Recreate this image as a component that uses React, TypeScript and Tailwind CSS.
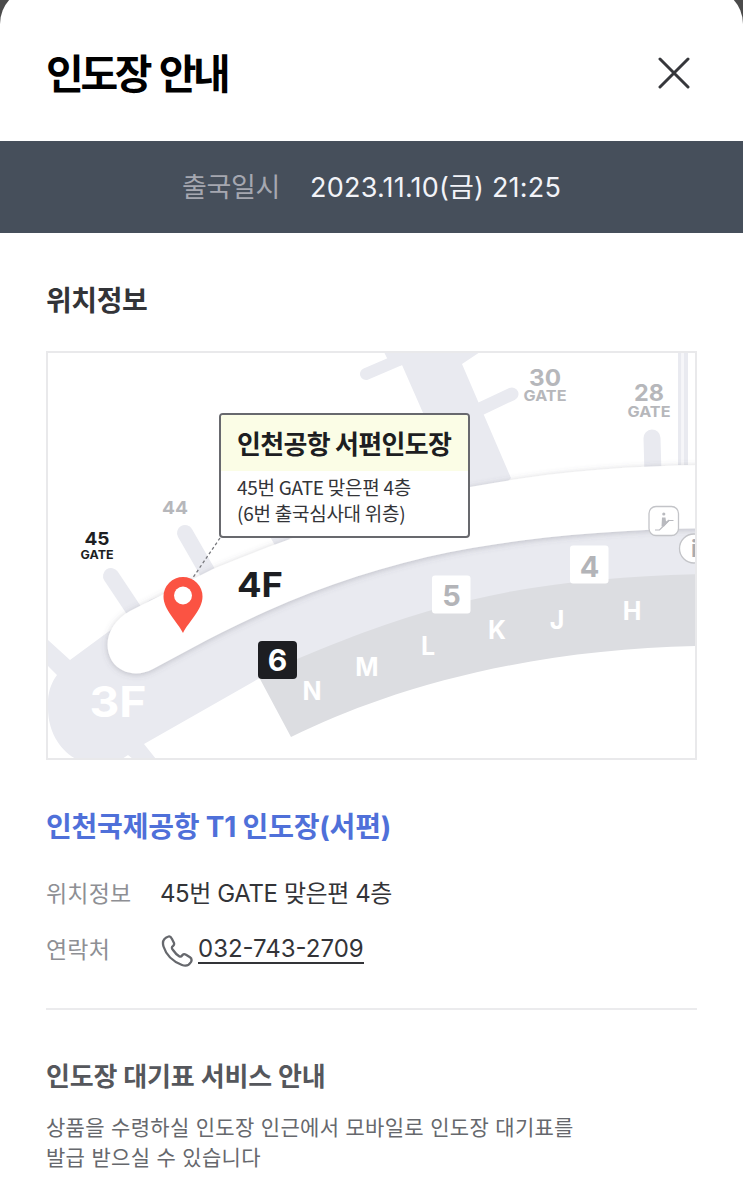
import type { ReactNode } from 'react';

const checkInCounters = [
  { label: 'N', x: 312, y: 700 },
  { label: 'M', x: 367, y: 676 },
  { label: 'L', x: 428, y: 655 },
  { label: 'K', x: 497, y: 639 },
  { label: 'J', x: 557, y: 629 },
  { label: 'H', x: 632, y: 620 },
];

function TerminalMap() {
  return (
    <svg viewBox="48 353 647 405" className="block h-[405px] w-[647px]" fontFamily="Inter, sans-serif" fontWeight="700" textAnchor="middle">
      <defs>
        <filter id="hallShadow" x="-5%" y="-10%" width="110%" height="125%">
          <feDropShadow dx="0" dy="1" stdDeviation="3" floodColor="#5c5f6b" floodOpacity="0.32" />
        </filter>
      </defs>

      {/* concourse and gate arms */}
      <g fill="#e9eaf0">
        <path d="M384 352H480L462 364L511 478L470 520L402 365L392 368Z" />
        <path d="M678 352h3.5v113H678zM684 352h4v113h-4z" />
        <path d="M681.500 352h2.500v113h-2.500z" fill="#f6f6f9" />
      </g>
      <g stroke="#e9eaf0" strokeLinecap="round" fill="none">
        <path d="M366 374L408 356" strokeWidth="12" />
        <path d="M512 394L478 410" strokeWidth="13" />
        <path d="M652 438L653 475" strokeWidth="17" />
        <path d="M185 533L212 580" strokeWidth="16" />
        <path d="M111 576L139 618" strokeWidth="16" />
        <path d="M268 517L284 545" strokeWidth="16" />
      </g>

      {/* 3F */}
      <path
        d="M47 639L70 660L108 632L150 600C300 535 480 490 696 500V590C560 580 420 620 258 679L144 744L156 759H133L128 755L122 759H76C60 750 48 732 48 708C47 694 51 683 57 675L47 665Z"
        fill="#e9eaf0"
      />
      <path d="M260 679L297 659C360 633 410 614 471 600C540 583 620 576 700 574V646C590 648 480 665 380 700C350 710 320 723 291 737Z" fill="#dcdde1" />

      {/* 4F */}
      <path
        d="M130 611L213 569C310 529 400 500 470 487C550 472 630 465 720 465V528C610 529 510 538 427 557C350 575 280 602 207 640L153 669C138 677 121 674 112 661C102 644 109 623 130 611Z"
        fill="#fff"
        filter="url(#hallShadow)"
      />

      <g fill="#b6b7bb">
        <text x="545" y="386" fontSize="23" textLength="32" lengthAdjust="spacingAndGlyphs">30</text>
        <text x="545" y="401" fontSize="14.500" textLength="43" lengthAdjust="spacingAndGlyphs">GATE</text>
        <text x="649" y="401" fontSize="23" textLength="30" lengthAdjust="spacingAndGlyphs">28</text>
        <text x="649" y="417" fontSize="14.500" textLength="43" lengthAdjust="spacingAndGlyphs">GATE</text>
        <text x="175" y="514" fontSize="18" textLength="26" lengthAdjust="spacingAndGlyphs">44</text>
      </g>
      <g fill="#1d1e22">
        <text x="97" y="545" fontSize="18" textLength="25" lengthAdjust="spacingAndGlyphs">45</text>
        <text x="97" y="559" fontSize="11.500" textLength="33" lengthAdjust="spacingAndGlyphs">GATE</text>
        <text x="260" y="597" fontSize="34" textLength="46" lengthAdjust="spacingAndGlyphs">4F</text>
      </g>
      <text x="118" y="717" fontSize="43" textLength="57" lengthAdjust="spacingAndGlyphs" fill="#fff">3F</text>

      <g fill="#fff" fontSize="25">
        {checkInCounters.map((counter) => (
          <text key={counter.label} x={counter.x} y={counter.y}>{counter.label}</text>
        ))}
      </g>

      <rect x="258" y="641" width="39" height="38" rx="4" fill="#1d1e22" />
      <text x="277.500" y="671" fontSize="30" fill="#fff">6</text>
      <rect x="432" y="575.500" width="38.500" height="38" rx="3" fill="#fff" />
      <text x="451.500" y="606" fontSize="29" fill="#b3b4b8">5</text>
      <rect x="570" y="545.500" width="38.500" height="38" rx="3" fill="#fff" />
      <text x="589.500" y="577" fontSize="29" fill="#b3b4b8">4</text>

      {/* escalator and information */}
      <rect x="649" y="506.500" width="29.500" height="29" rx="7" fill="#fff" stroke="#c3c4c8" strokeWidth="1.300" />
      <circle cx="663.800" cy="514" r="1.600" fill="#b9babf" />
      <path d="M662 517.500h3.500l.5 4 3-2 .5 1-5.500 6-2.500 0z" fill="#b9babf" />
      <path d="M655 530h4.500L669 520.500H673.500" fill="none" stroke="#b9babf" strokeWidth="1.200" />
      <circle cx="694" cy="548.500" r="14.500" fill="#fff" stroke="#c3c4c8" strokeWidth="1.300" />
      <text x="694" y="557" fontSize="23" fill="#aaabb0">i</text>

      {/* pin */}
      <path d="M220 538L192 579" stroke="#77787d" strokeWidth="1.300" strokeDasharray="3 2.500" />
      <path d="M183 633C177 621 163.500 610 163.500 596.500A19.500 19.500 0 0 1 202.500 596.500C202.500 610 189 621 183 633Z" fill="#fb5343" />
      <circle cx="183" cy="595.500" r="9" fill="#fff" />
    </svg>
  );
}

function InfoRow({ label, children }: { label: string; children: ReactNode }) {
  return (
    <div className="flex h-14 items-center">
      <dt className="w-[114px] text-[23px] tracking-[0.2px] text-[#8e8f94]">{label}</dt>
      <dd className="flex items-center text-[24px] text-[#333438]">{children}</dd>
    </div>
  );
}

export default function App() {
  return (
    <div className="h-[1182px] w-[743px] overflow-hidden bg-[#4b4b4b] font-[Inter,'Noto_Sans_CJK_KR',sans-serif]">
      {/* the sheet's top edge sits just above the viewport */}
      <div className="-mt-3 h-[1194px] overflow-hidden rounded-t-[36px] bg-white pt-3">
        <header className="flex h-[141px] items-center justify-between pr-[53px] pl-[46px]">
          <h1 className="pt-[6px] text-[41px] leading-[60px] font-bold tracking-[-3.300px] text-black [word-spacing:3px]">인도장 안내</h1>
          <button aria-label="닫기">
            <svg viewBox="0 0 32 32" className="mt-1 size-8" fill="none" stroke="#36373b" strokeWidth="3" strokeLinecap="round">
              <path d="M2 2L30 30M30 2L2 30" />
            </svg>
          </button>
        </header>

        <div className="flex h-[92px] items-center justify-center gap-[30px] bg-[#464f5b] pt-0.5 text-[27px]">
          <span className="tracking-[-0.3px] text-[#a5a7b0]">출국일시</span>
          <span className="tracking-[0.2px] text-[#f2f3f8]">2023.11.10(금) 21:25</span>
        </div>

        <main className="px-[46px]">
          <h2 className="pt-[47px] text-[28px] leading-[42px] font-bold tracking-[-0.4px] text-[#333438]">위치정보</h2>

          <div className="relative mt-[29px] h-[409px] w-[651px] overflow-hidden border-2 border-[#e9e9eb]">
            <TerminalMap />
            <div className="absolute top-[60px] left-[171px] h-[125px] w-[251px] overflow-hidden rounded-[4px] border-2 border-[#68696e] bg-white font-['Noto_Sans_CJK_KR',sans-serif]">
              <p className="h-[56px] bg-[#fbfde6] pl-4 text-[26px] leading-[55px] font-bold tracking-[-0.7px] whitespace-nowrap text-[#1d1e22]">인천공항 서편인도장</p>
              <p className="pt-[3px] pl-4 text-[19px] leading-[26px] tracking-[-0.25px] whitespace-nowrap text-[#333438]">
                45번 GATE 맞은편 4층
                <br />
                (6번 출국심사대 위층)
              </p>
            </div>
          </div>

          <h3 className="mt-[46px] text-[28px] leading-[42px] font-bold tracking-[-0.2px] text-[#4f70d9]">인천국제공항 T1 인도장(서편)</h3>

          <dl className="mt-[18px] border-b-2 border-[#ebebed] pb-[30px]">
            <InfoRow label="위치정보">
              <span className="tracking-[-0.4px]">45번 GATE 맞은편 4층</span>
            </InfoRow>
            <InfoRow label="연락처">
              <svg viewBox="0 0 32 32" className="mt-0.5 mr-[5px] ml-px size-8" fill="none" stroke="#66686d" strokeWidth="2.300" strokeLinejoin="round">
                <path d="M7.500 1.500C9 .8 10 2 11 4L13 8C13.500 9.500 13 10.200 12 11C10.500 12 10.500 13 12 15C14 18 16 20 18.500 21.500C20 22.200 20.500 21.500 21.500 20C22.500 18.800 23.500 18.800 25 19.700L29 22.300C31 23.700 31 25 30 27C28 30.500 25 31.500 21 30C12 26.500 5 19.500 2.500 11.500C1 6.500 3 3 7.500 1.500Z" />
              </svg>
              <a href="tel:032-743-2709" className="border-b-2 border-[#333438] leading-[26px]">032-743-2709</a>
            </InfoRow>
          </dl>

          <h3 className="mt-[47px] text-[26px] leading-[40px] font-bold tracking-[-0.15px] text-[#55575c]">인도장 대기표 서비스 안내</h3>
          <p className="mt-[16px] text-[21px] leading-[30px] tracking-[0.3px] text-[#66686d]">
            상품을 수령하실 인도장 인근에서 모바일로 인도장 대기표를
            <br />
            발급 받으실 수 있습니다
          </p>
        </main>
      </div>
    </div>
  );
}
